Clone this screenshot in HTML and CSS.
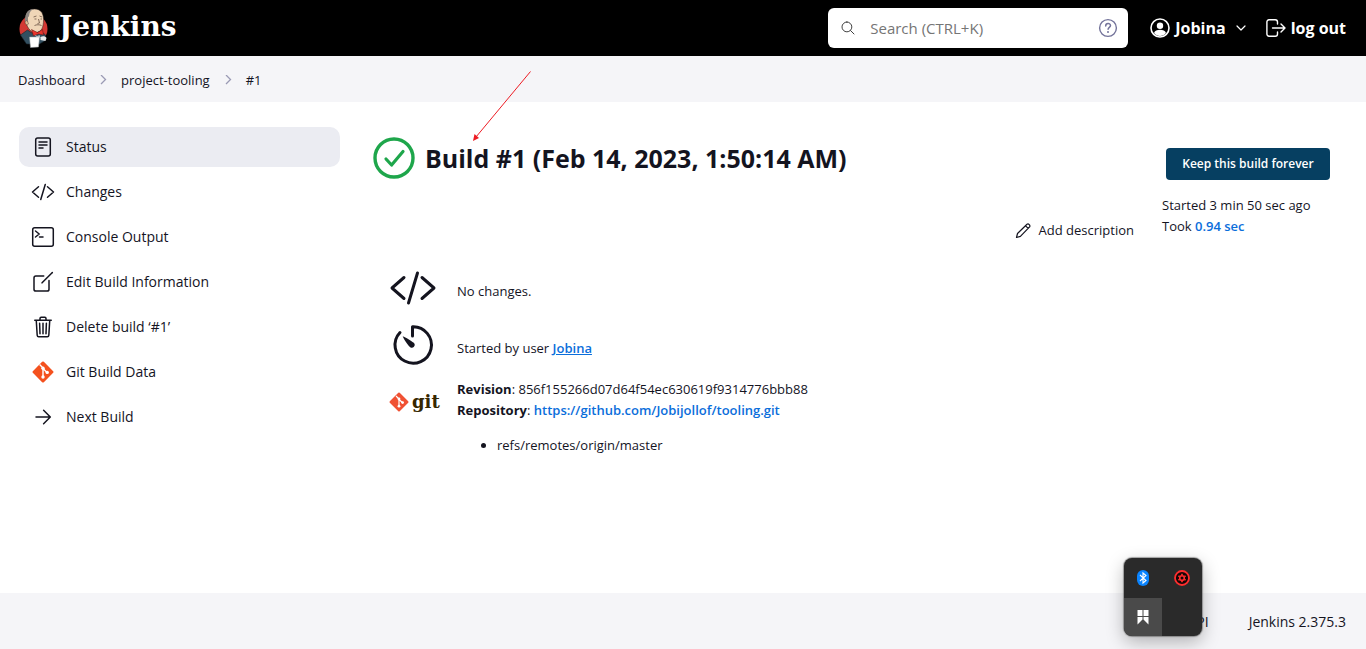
FILE: index.html
```html
<!DOCTYPE html>
<html lang="en">
<head>
<meta charset="utf-8">
<meta name="viewport" content="width=device-width, initial-scale=1">
<title>project-tooling #1 [Jenkins]</title>
<link rel="stylesheet" href="styles.css">
</head>
<body class="page">
<header class="header">
  <a class="brand" href="#">
    <svg class="brand-head" viewBox="0 0 30 40" aria-hidden="true">
      <circle cx="15" cy="21" r="14" fill="#d33833"/>
      <path d="M7 13C6 5 10 1 16 1c7 0 9 5 9 11 0 7-2 12-7 13-5 0-9-4-11-12z" fill="#f0d6b7" stroke="#2a2320" stroke-width=".5"/>
      <path d="M7 9C8 3 11 1 15 1.200c-3 1-4 3-4.500 7l-1 1v4l-2 2C6 14 6 11 7 9z" fill="#8b8580"/>
      <path d="M9 13c-2-1-3 1-2 3 1 1 2 1 3 0z" fill="#e6bd97" stroke="#2a2320" stroke-width=".4"/>
      <path d="M15 9l3-1M21 8l2.500 1M16 11h2M22 11h1.500M20 11l1 4-2 .5M16 17.500c2-1 5-1 7 0" fill="none" stroke="#6b5344" stroke-width=".8"/>
      <path d="M2 27l7-5 6 4 7-3 5 4-1 6-5 3H8z" fill="#335061" stroke="#18232b" stroke-width=".6"/>
      <path d="M13 21.500l6 3 5-3 1 5.500-5-1-5 2z" fill="#e8342d" stroke="#5c1513" stroke-width=".5"/>
      <path d="M16 27l3 1 2-1 1 3-4-1z" fill="#b9c7d0"/>
      <path d="M11 29h10l-1 10-8 .5z" fill="#fff" stroke="#9aa0a5" stroke-width=".5"/>
      <path d="M22 29c2-1 5-1 6 1l-1 3-5-1z" fill="#e7e9ea"/>
    </svg>
    <span class="brand-name">Jenkins</span>
  </a>
  <form class="search" role="search">
    <svg class="search-glass" viewBox="0 0 512 512" aria-hidden="true"><path d="M221 64a157 157 0 10157 157A157 157 0 00221 64zM338 338l110 110" fill="none" stroke="#333" stroke-width="30" stroke-linecap="round"/></svg>
    <input class="search-input" type="search" aria-label="Search" placeholder="Search (CTRL+K)">
    <a class="search-help" href="#" aria-label="Search help">
      <svg viewBox="0 0 20 20"><circle cx="10" cy="10" r="8.400" fill="none" stroke="#73739a" stroke-width="1.400"/><path d="M7.700 8c0-3.300 4.800-3.200 4.800-.4 0 1.800-2.400 1.800-2.400 3.700" fill="none" stroke="#73739a" stroke-width="1.500" stroke-linecap="round"/><circle cx="10" cy="14" r="1" fill="#73739a"/></svg>
    </a>
  </form>
  <nav class="account" aria-label="Account">
    <a class="account-link" href="#">
      <svg class="icon20" viewBox="0 0 20 20" aria-hidden="true"><circle cx="10" cy="10" r="9" fill="none" stroke="#fff" stroke-width="1.600"/><circle cx="10" cy="7.700" r="3.200" fill="#fff"/><path d="M4 15c1.200-4.300 10.800-4.300 12 0-3 4-9 4-12 0z" fill="#fff"/></svg>
      Jobina
    </a>
    <button class="account-more" type="button" aria-label="Account menu"><svg class="icon10" viewBox="0 0 10 10" aria-hidden="true"><path d="M1 3l4 4 4-4" fill="none" stroke="#fff" stroke-width="1.200" stroke-linecap="round" stroke-linejoin="round"/></svg></button>
    <a class="account-link" href="#">
      <svg class="icon20" viewBox="0 0 20 20" aria-hidden="true"><path d="M11.500 6V4a2.300 2.300 0 00-2.300-2.300H3A2.200 2.200 0 00.9 4v12A2.200 2.200 0 003 18.300h6.200a2.300 2.300 0 002.300-2.300v-2M15 6l4 4-4 4M6.500 10H19" fill="none" stroke="#fff" stroke-width="1.400" stroke-linecap="round" stroke-linejoin="round"/></svg>
      log out
    </a>
  </nav>
</header>

<nav class="crumbs" aria-label="Breadcrumb">
  <a href="#">Dashboard</a>
  <svg class="icon10" viewBox="0 0 10 10" aria-hidden="true"><path d="M3 0L7.500 4.500 3 9" class="crumb-arrow"/></svg>
  <a href="#">project-tooling</a>
  <svg class="icon10" viewBox="0 0 10 10" aria-hidden="true"><path d="M3 0L7.500 4.500 3 9" class="crumb-arrow"/></svg>
  <a href="#">#1</a>
</nav>

<div class="body">
  <nav class="tasks" aria-label="Build">
    <a class="task task-active" href="#"><svg class="icon24 line" viewBox="0 0 24 24" aria-hidden="true"><rect x="4.700" y="2.900" width="14.600" height="18.200" rx="2"/><path d="M8 7h8M8 10h8M8 13h4"/></svg>Status</a>
    <a class="task" href="#"><svg class="icon24 line" viewBox="0 0 512 512" aria-hidden="true"><path class="wide" d="M160 368L32 256l128-112M352 368l128-112-128-112M304 96l-96 320"/></svg>Changes</a>
    <a class="task" href="#"><svg class="icon24 line" viewBox="0 0 24 24" aria-hidden="true"><rect x="1.700" y="2.700" width="20.600" height="18.600" rx="2"/><path d="M4.500 6l3.700 3-3.700 3M8.500 12h3.500"/></svg>Console Output</a>
    <a class="task" href="#"><svg class="icon24 line" viewBox="0 0 512 512" aria-hidden="true"><path class="wide" d="M384 224v184a40 40 0 01-40 40H104a40 40 0 01-40-40V168a40 40 0 0140-40h167.500M236 274L440 68"/><path class="wide" d="M452 56l3-3"/></svg>Edit Build Information</a>
    <a class="task" href="#"><svg class="icon24 line" viewBox="0 0 512 512" aria-hidden="true"><path class="wide" d="M112 112l20 320c1 18 14 32 32 32h184c18 0 31-14 32-32l20-320M80 112h352M192 112V72a24 24 0 0124-24h80a24 24 0 0124 24v40M256 176v224M184 176l8 224M328 176l-8 224"/></svg>Delete build ‘#1’</a>
    <a class="task" href="#"><svg class="icon24" viewBox="0 0 24 24" aria-hidden="true"><rect x="4.200" y="4.200" width="15.600" height="15.600" rx="1.200" transform="rotate(45 12 12)" fill="#f4511e"/><path d="M8.600 4.600l3.400 3.400v9M12 8.500l4 4" fill="none" stroke="#fff" stroke-width="1.400"/><circle cx="12" cy="8.200" r="1.700" fill="#fff"/><circle cx="12" cy="17" r="1.700" fill="#fff"/><circle cx="16.200" cy="12.400" r="1.700" fill="#fff"/></svg>Git Build Data</a>
    <a class="task" href="#"><svg class="icon24 line" viewBox="0 0 24 24" aria-hidden="true"><path d="M5 12h14M12.600 5.300L19.300 12l-6.700 6.700"/></svg>Next Build</a>
  </nav>

  <main class="main">
    <section class="build">
      <div class="title">
        <svg class="title-icon" viewBox="0 0 42 42" role="img" aria-label="Success"><circle cx="21" cy="21" r="19" fill="none" stroke="#1ea64b" stroke-width="3.400"/><path d="M13 22l5.600 6L30 14.500" fill="none" stroke="#1ea64b" stroke-width="3.200" stroke-linecap="round" stroke-linejoin="round"/></svg>
        <h1 class="title-text">Build #1 (Feb 14, 2023, 1:50:14 AM)</h1>
      </div>
      <a class="describe" href="#"><svg class="icon16" viewBox="0 0 16 16" aria-hidden="true"><path d="M1.500 14.500l1-4L12 1.300c1.500-1 3.600 1 2.600 2.600L5.400 13.400zM10.600 2.800l2.600 2.600" fill="none" stroke="#14141f" stroke-width="1.200" stroke-linejoin="round"/></svg>Add description</a>
      <div class="facts">
        <svg class="fact-icon line" viewBox="0 0 512 512" aria-hidden="true"><path class="wide" d="M160 368L32 256l128-112M352 368l128-112-128-112M304 96l-96 320"/></svg>
        <p class="fact">No changes.</p>
        <svg class="fact-icon line" viewBox="0 0 48 48" aria-hidden="true"><path class="dial" d="M11 11.500A18.200 18.200 0 1023.500 5.800V15"/><path class="needle" d="M13.700 15.200c3 1 8.600 4.500 11.400 6.800a2.900 2.900 0 01-3.900 4.200c-2.600-2.700-6.300-7.500-7.500-11z"/></svg>
        <p class="fact">Started by user <a class="link underlined" href="#">Jobina</a></p>
        <div class="git">
          <svg class="icon20" viewBox="0 0 20 20" aria-hidden="true"><rect x="3" y="3" width="14" height="14" rx="1" transform="rotate(45 10 10)" fill="#f05133"/><path d="M7 4l3 3v7M10 7.500l3.400 3" fill="none" stroke="#fff" stroke-width="1.200"/><circle cx="10" cy="7" r="1.400" fill="#fff"/><circle cx="10" cy="14.200" r="1.400" fill="#fff"/><circle cx="13.600" cy="10.600" r="1.400" fill="#fff"/></svg>
          <span class="git-name">git</span>
        </div>
        <div class="revision">
          <b>Revision</b>: 856f155266d07d64f54ec630619f9314776bbb88<br>
          <b>Repository</b>: <a class="link" href="#">https://github.com/Jobijollof/tooling.git</a>
          <ul class="refs"><li>refs/remotes/origin/master</li></ul>
        </div>
      </div>
    </section>
    <aside class="summary">
      <button class="keep" type="button">Keep this build forever</button>
      <p class="timing">Started 3 min 50 sec ago<br>Took <a class="link" href="#">0.94 sec</a></p>
    </aside>
  </main>
</div>

<footer class="footer"><a href="#">REST API</a><a href="#">Jenkins 2.375.3</a></footer>

<svg class="pointer" viewBox="0 0 58 70" aria-hidden="true"><path d="M57.500 .5L3 66" stroke="#ed1c24" stroke-width="1"/><path d="M0 70l1.500-7 4.500 4z" fill="#ed1c24"/></svg>

<div class="tray">
  <span class="tray-cell"><svg class="icon16" viewBox="0 0 16 16" role="img" aria-label="Bluetooth"><rect x="2" y="0" width="12" height="16" rx="6" fill="#0a84ff"/><path d="M5 5l6 5.500L8 13V3l3 2.500L5 11" fill="none" stroke="#fff" stroke-width="1.100"/></svg></span>
  <span class="tray-cell"><svg class="icon16" viewBox="0 0 16 16" role="img" aria-label="Recorder"><circle cx="8" cy="8" r="7" fill="#140505" stroke="#ff2d2d" stroke-width="1.800"/><circle cx="8" cy="8" r="2.300" fill="none" stroke="#ff2d2d" stroke-width="1.600"/><path d="M8 3.800v1.500M8 10.700v1.500M4.400 5.900l1.300.8M10.300 9.300l1.300.8M4.400 10.100l1.300-.8M10.300 6.700l1.300-.8" stroke="#ff2d2d" stroke-width="1.700"/></svg></span>
  <span class="tray-cell tray-on"><svg class="icon16" viewBox="0 0 16 16" role="img" aria-label="Bookmark"><path d="M2.500 1h5v6h-5zM8.500 1h5v6h-5zM2.500 8h5v2.500l-5 5zM8.500 8h5v7.500l-5-5z" fill="#fff"/></svg></span>
</div>
</body>
</html>
```
FILE: styles.css
```css
* {
  box-sizing: border-box;
}

.page {
  position: relative;
  display: flex;
  flex-direction: column;
  min-height: 100vh;
  margin: 0;
  background: #fff;
  color: #14141f;
  font: 400 13px/21px "Open Sans", "Noto Sans", sans-serif;
}

a {
  color: inherit;
  text-decoration: none;
}

svg {
  display: block;
  flex: none;
}

.icon10 { width: 10px; height: 10px; }
.icon16 { width: 16px; height: 16px; }
.icon20 { width: 20px; height: 20px; }
.icon24 { width: 24px; height: 24px; }

.line {
  fill: none;
  stroke: #14141f;
  stroke-width: 1.5;
  stroke-linecap: round;
  stroke-linejoin: round;
}

.wide { stroke-width: 32; }
.dial { stroke-width: 3; }
.needle { fill: #14141f; stroke: none; }

/* Header */
.header {
  display: flex;
  align-items: center;
  height: 56px;
  padding: 0 20px 0 18px;
  background: #000;
  color: #fff;
}

.brand {
  display: flex;
  align-items: center;
  gap: 10px;
  margin-right: auto;
}

.brand-head { width: 31px; height: 40px; }

.brand-name {
  padding-bottom: 2px;
  font: 700 28px/32px "DejaVu Serif", serif;
}

.search {
  display: flex;
  align-items: center;
  width: 300px;
  height: 40px;
  margin-right: 22px;
  padding: 0 10px 0 12px;
  border-radius: 6px;
  background: #fff;
}

.search-glass { width: 16px; height: 16px; }

.search-input {
  flex: 1;
  min-width: 0;
  padding: 0 14px;
  border: 0;
  outline: 0;
  background: none;
  color: #14141f;
  font: 400 15px/24px "Open Sans", sans-serif;
}

.search-input::placeholder { color: #757575; }
.search-help { width: 20px; }

.account {
  display: flex;
  align-items: center;
  font-size: 16px;
  font-weight: 700;
}

.account-link {
  display: flex;
  align-items: center;
  gap: 5px;
}

.account-more {
  padding: 10px;
  margin-right: 10px;
  border: 0;
  background: none;
}

/* Breadcrumbs */
.crumbs {
  display: flex;
  align-items: center;
  gap: 13px;
  height: 46px;
  padding: 2px 18px 0;
  background: #f5f5f8;
}

.crumb-arrow {
  fill: none;
  stroke: #9a9ab4;
  stroke-width: 1.3;
}

/* Two-column body */
.body {
  display: flex;
  flex: 1;
  gap: 33px;
  padding: 25px 36px 25px 19px;
}

.tasks {
  display: flex;
  flex-direction: column;
  flex: 0 0 321px;
  gap: 5px;
}

.task {
  display: flex;
  align-items: center;
  gap: 11px;
  height: 40px;
  padding: 0 12px;
  border-radius: 10px;
  font-size: 14px;
  font-weight: 500;
  line-height: 20px;
}

.task-active { background: #ebecf2; }

.main {
  display: flex;
  flex: 1;
  gap: 28px;
}

.build {
  flex: 1;
  padding-top: 10px;
}

.title {
  display: flex;
  align-items: center;
  gap: 10px;
}

.title-icon { width: 42px; height: 42px; }

.title-text {
  margin: 0;
  font-size: 25px;
  font-weight: 700;
  line-height: 32px;
}

.describe {
  display: flex;
  align-items: center;
  justify-content: flex-end;
  gap: 8px;
  margin: 41px 0 23px;
  font-weight: 500;
}

.facts {
  display: grid;
  grid-template-columns: 48px 1fr;
  column-gap: 20px;
  row-gap: 9px;
  padding-left: 16px;
}

.fact-icon { width: 48px; height: 48px; }
.fact { margin: 17px 0 0; }

.git {
  display: flex;
  align-items: center;
  gap: 3px;
  height: 48px;
}

.git-name {
  color: #362701;
  font: 700 18px/20px "DejaVu Serif", serif;
}

.revision { padding-top: 1px; }

.refs {
  margin: 14px 0 0;
  padding-left: 40px;
}

.link {
  color: #0b6edb;
  font-weight: 600;
}

.underlined { text-decoration: underline; }

/* Summary column */
.summary {
  flex: 0 0 168px;
  padding-top: 21px;
}

.keep {
  display: block;
  width: 164px;
  height: 32px;
  margin-left: auto;
  padding: 0;
  border: 0;
  border-radius: 4px;
  background: #063f61;
  color: #fff;
  font: 600 12px/20px "Open Sans", sans-serif;
}

.timing { margin: 15px 0 0; }

/* Footer */
.footer {
  display: flex;
  align-items: center;
  justify-content: flex-end;
  gap: 40px;
  height: 56px;
  padding: 0 20px;
  background: #f5f5f8;
  font-size: 14px;
}

/* Items floating above the page */
.pointer {
  position: absolute;
  top: 71px;
  left: 473px;
  width: 58px;
  height: 70px;
}

.tray {
  position: absolute;
  right: 164px;
  bottom: 13px;
  display: grid;
  grid-template-columns: 38px 40px;
  grid-template-rows: 40px 38px;
  overflow: hidden;
  border-radius: 8px;
  background: #2a2a2a;
  box-shadow: 0 0 1px 1px rgba(80, 80, 80, 0.5), 0 6px 18px rgba(0, 0, 0, 0.28);
}

.tray-cell {
  display: grid;
  place-items: center;
}

.tray-on { background: #4a4a4a; }
```
